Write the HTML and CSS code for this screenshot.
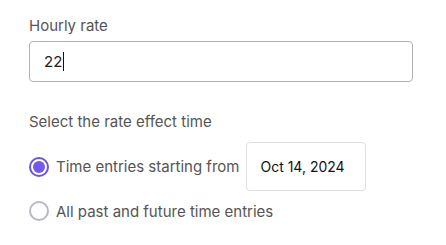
FILE: index.html
```html
<!DOCTYPE html>
<html lang="en">
<head>
    <meta charset="UTF-8">
    <meta name="viewport" content="width=device-width, initial-scale=1.0">
    <title>Hourly rate</title>
    <link rel="stylesheet" href="styles.css">
</head>
<body>
    <div class="form">
        <label class="field-label" for="rate">Hourly rate</label>
        <div class="rate-input">
            <span class="rate-value">22</span><span class="caret"></span>
        </div>

        <p class="section-label">Select the rate effect time</p>

        <div class="options">
            <div class="option">
                <span class="radio checked"></span>
                <span class="option-text">Time entries starting from</span>
                <div class="date-box">Oct 14, 2024</div>
            </div>
            <div class="option">
                <span class="radio"></span>
                <span class="option-text">All past and future time entries</span>
            </div>
        </div>
    </div>
</body>
</html>
```

FILE: styles.css
```css
* {
    margin: 0;
    padding: 0;
    box-sizing: border-box;
    font-family: 'Inter', 'Open Sans', sans-serif;
}

body {
    background: #ffffff;
    padding: 16px 33px 0 29px;
}

.form {
    display: flex;
    flex-direction: column;
}

.field-label {
    color: #555555;
    font-size: 15px;
    line-height: 20px;
    margin-bottom: 5px;
}

.rate-input {
    height: 41px;
    border: 1px solid #b3b3b3;
    border-radius: 4px;
    display: flex;
    align-items: center;
    padding-left: 14px;
}

.rate-value {
    color: #222222;
    font-size: 15px;
}

.caret {
    width: 1px;
    height: 19px;
    background: #111111;
    margin-left: 1px;
}

.section-label {
    color: #555555;
    font-size: 15px;
    line-height: 20px;
    margin-top: 30px;
    margin-bottom: 10px;
}

.options {
    display: flex;
    flex-direction: column;
    gap: 2px;
}

.option {
    display: flex;
    align-items: center;
    gap: 7px;
    min-height: 36px;
}

.radio {
    width: 20px;
    height: 20px;
    border-radius: 50%;
    border: 2px solid #b9b9c6;
    flex-shrink: 0;
    position: relative;
}

.radio.checked {
    border-color: #6e53e0;
}

.radio.checked::after {
    content: '';
    position: absolute;
    top: 2px;
    left: 2px;
    width: 12px;
    height: 12px;
    border-radius: 50%;
    background: #7358ee;
}

.option-text {
    color: #555555;
    font-size: 15px;
}

.date-box {
    border: 1px solid #e0e0e0;
    border-radius: 4px;
    height: 49px;
    width: 120px;
    display: flex;
    align-items: center;
    padding-left: 13px;
    color: #111111;
    font-size: 14px;
}
```
